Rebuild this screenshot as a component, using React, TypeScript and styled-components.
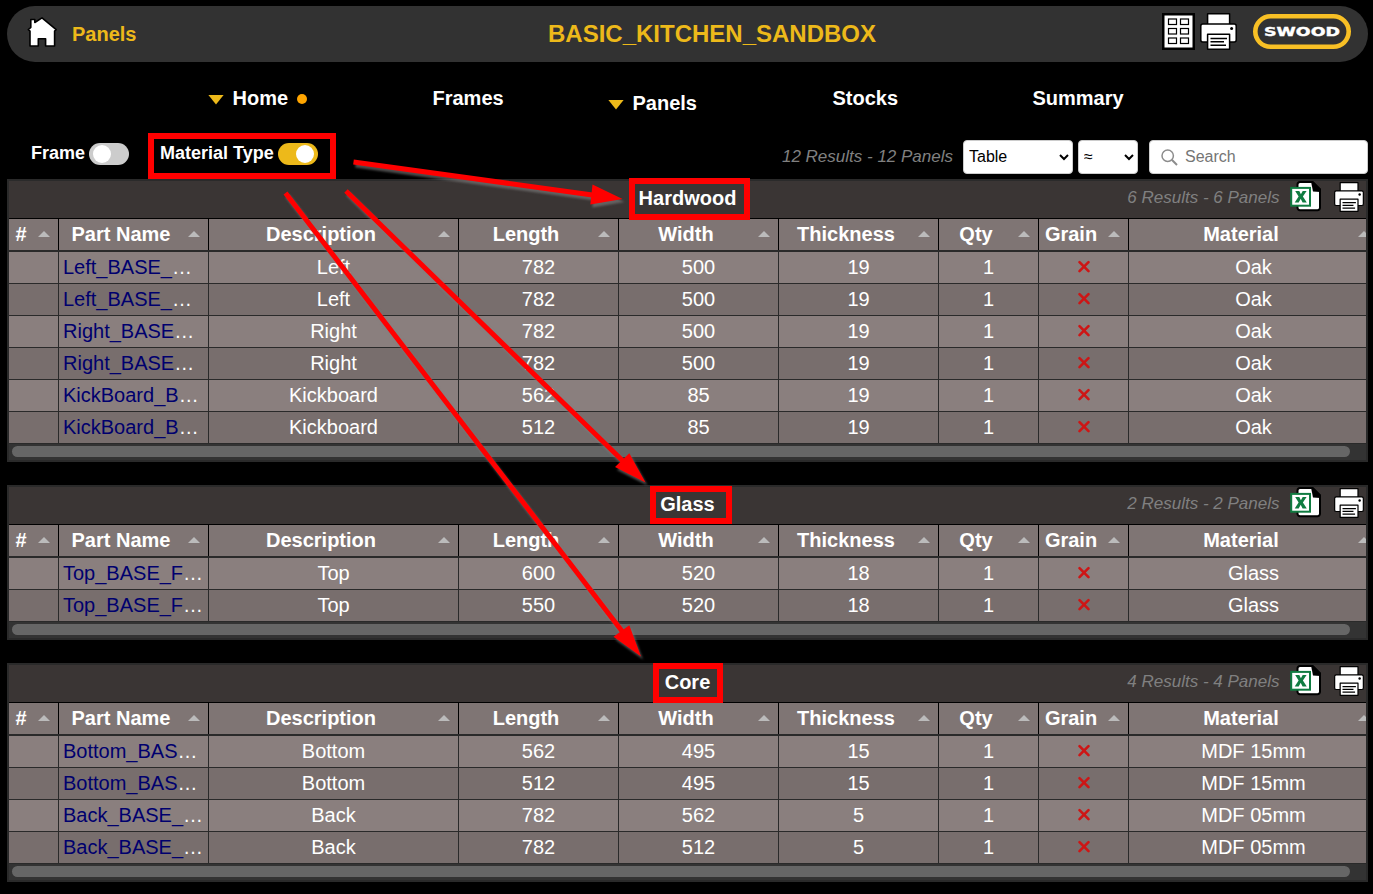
import React from "react";
import styled, { createGlobalStyle } from "styled-components";

const GlobalStyle = createGlobalStyle`
  * { box-sizing: border-box; }
  html, body { margin: 0; background: #000; overflow: hidden; }
  body { font-family: "Liberation Sans", Arial, sans-serif; color: #fff; }
`;

const Page = styled.div`
  position: relative;
  width: 1373px;
  height: 894px;
  padding: 6px 5px 0 7px;
  overflow: hidden;
  background: #000;
`;

const Header = styled.header`
  display: grid;
  grid-template-columns: 522px 1fr auto;
  align-items: center;
  height: 56px;
  padding: 0 17px 0 19px;
  border-radius: 28px;
  background: #323232;
`;

const HeaderLeft = styled.div`
  display: flex;
  align-items: center;
  gap: 14px;
  color: #edb91a;
  font-size: 20px;
  font-weight: bold;
`;

const HomeIcon = styled.svg`
  margin-top: -4px;
`;

const Title = styled.h1`
  margin: 0;
  color: #edb91a;
  font-size: 24px;
  line-height: 28px;
`;

const HeaderRight = styled.div`
  display: flex;
  align-items: flex-start;
  justify-content: flex-end;
  height: 42px;
`;

const Logo = styled.svg`
  margin: 1px 0 0 16px;
`;

const Nav = styled.nav`
  display: grid;
  grid-template-columns: repeat(5, 200px);
  height: 71px;
  padding: 24px 0 0 201px;
`;

const NavItem = styled.div<{ $open?: boolean }>`
  display: flex;
  align-items: center;
  height: 24px;
  margin-top: ${(p) => (p.$open ? 5 : 0)}px;
  font-size: 20px;
  font-weight: bold;
`;

const NavMark = styled.span<{ $shown?: boolean }>`
  width: 16px;
  height: 10px;
  margin: 3px 8.5px 0 0;
  clip-path: polygon(0 0, 100% 0, 50% 100%);
  background: ${(p) => (p.$shown ? "#edb91a" : "transparent")};
`;

const NavDot = styled.span`
  width: 10px;
  height: 10px;
  margin: 2px 0 0 8.5px;
  border-radius: 50%;
  background: #ffa500;
`;

const Toolbar = styled.div`
  display: flex;
  height: 46px;
  padding: 7px 0 0 24px;
`;

const ToggleGroup = styled.div`
  display: flex;
  height: 28px;
  align-items: center;
  margin-right: 31px;
`;

const ToggleLabel = styled.span`
  font-size: 18px;
  font-weight: bold;
  line-height: 26px;
  margin: -2px 4px 0 0;
`;

const Track = styled.span<{ $on?: boolean }>`
  display: flex;
  justify-content: ${(p) => (p.$on ? "flex-end" : "flex-start")};
  align-items: center;
  width: 40px;
  height: 22px;
  padding: 0 4px;
  border-radius: 11px;
  background: ${(p) => (p.$on ? "#edb91a" : "#ccc")};
`;

const Knob = styled.span`
  width: 18px;
  height: 18px;
  border-radius: 50%;
  background: #fff;
`;

const Controls = styled.div`
  display: flex;
  margin-left: auto;
`;

const Count = styled.span`
  color: #808080;
  font-size: 17px;
  font-style: italic;
  line-height: 34px;
  white-space: nowrap;
`;

const Select = styled.select<{ $w: number; $left: number }>`
  width: ${(p) => p.$w}px;
  height: 34px;
  margin-left: ${(p) => p.$left}px;
  padding: 0 1px 2px;
  border: 1px solid #ccc;
  border-radius: 4px;
  background-color: #fff;
  color: #000;
  font: 16px "Liberation Sans", Arial, sans-serif;
`;

const SearchBox = styled.label`
  display: flex;
  align-items: center;
  gap: 7px;
  width: 219px;
  height: 34px;
  margin-left: 11px;
  padding: 0 11px;
  border: 1px solid #ccc;
  border-radius: 4px;
  background: #fff;
`;

const SearchInput = styled.input`
  width: 160px;
  padding: 0;
  border: 0;
  outline: 0;
  font: 16px "Liberation Sans", Arial, sans-serif;
  &::placeholder { color: #757575; }
`;

const Panel = styled.section`
  width: 1361px;
  margin-bottom: 23px;
  border: 2px solid #2a2a2a;
  background: #333;
  overflow: hidden;
`;

const PanelBar = styled.div`
  display: grid;
  grid-template-columns: 1fr auto 1fr;
  height: 38px;
  border-bottom: 1px solid #000;
  background: #3a3534;
`;

const PanelTitle = styled.h2`
  grid-column: 2;
  margin: 0;
  font-size: 20px;
  line-height: 34px;
`;

const PanelTools = styled.div`
  display: flex;
  justify-content: flex-end;
  align-items: flex-start;
`;

const ExcelIcon = styled.svg`
  margin-left: 9px;
`;

const PanelPrint = styled.svg`
  margin: 1px 2px 0 12.5px;
`;

const GridRow = styled.div<{ $tone: string; $head?: boolean }>`
  display: grid;
  grid-template-columns: 50px 150px 250px 160px 160px 160px 100px 90px 250px;
  width: 1370px;
  height: ${(p) => (p.$head ? 33 : 32)}px;
  border-bottom: ${(p) => (p.$head ? 2 : 1)}px solid #2a2a2a;
  background: ${(p) => p.$tone};
`;

const HeadCell = styled.div`
  display: grid;
  grid-template-columns: 1fr 12px;
  column-gap: 8px;
  align-items: center;
  padding: 0 8px 0 3px;
  border-right: 1px solid #000;
  font-size: 20px;
  font-weight: bold;
  line-height: 31px;
  text-align: center;
  white-space: nowrap;
`;

const HeadText = styled.span`
  margin: -1px -6px 0;
`;

const SortMark = styled.span`
  width: 12px;
  height: 6px;
  margin-top: -1px;
  clip-path: polygon(50% 0, 100% 100%, 0 100%);
  background: #bbb;
`;

const Cell = styled.div<{ $left?: boolean }>`
  display: flex;
  align-items: center;
  justify-content: ${(p) => (p.$left ? "flex-start" : "center")};
  padding: 0 4px 1px;
  border-right: 1px solid #2a2a2a;
  font-size: 20px;
  white-space: nowrap;
  overflow: hidden;
`;

const PartLink = styled.a`
  color: #00006e;
`;

const ScrollTrack = styled.div`
  height: 16px;
  padding: 2px 16px 3px 3px;
`;

const ScrollThumb = styled.div`
  height: 11px;
  border-radius: 6px;
  background: #666;
`;

const Callout = styled.div<{ $x: number; $y: number; $w: number; $h: number }>`
  position: absolute;
  left: ${(p) => p.$x}px;
  top: ${(p) => p.$y}px;
  width: ${(p) => p.$w}px;
  height: ${(p) => p.$h}px;
  border: 6px solid #f00;
`;

const Arrows = styled.svg`
  position: absolute;
  left: 0;
  top: 0;
  filter: drop-shadow(2px 3px 1px rgba(128, 128, 128, 0.6));
`;

const PrinterArt = () => (
  <g stroke="#000" strokeWidth="1.5" strokeLinejoin="round">
    <rect x="7.6" y="0.8" width="22" height="14" fill="#fff" />
    <rect x="0.8" y="11" width="35.4" height="18" rx="2" fill="#fff" />
    <path d="M7.600 36.200V21.200h22v15z" fill="#fff" />
    <circle cx="31.600" cy="15.500" r="1.500" fill="#000" stroke="none" />
    <path d="M10.500 25.500H27M10.500 28.700H24M10.500 32.200H26" strokeWidth="1.500" />
  </g>
);

const COLUMNS = ["#", "Part Name", "Description", "Length", "Width", "Thickness", "Qty", "Grain", "Material"];

type Row = [string, string, number, number, number, string];

const GROUPS: { title: string; rows: Row[] }[] = [
  {
    title: "Hardwood",
    rows: [
      ["Left_BASE_", "Left", 782, 500, 19, "Oak"],
      ["Left_BASE_", "Left", 782, 500, 19, "Oak"],
      ["Right_BASE", "Right", 782, 500, 19, "Oak"],
      ["Right_BASE", "Right", 782, 500, 19, "Oak"],
      ["KickBoard_B", "Kickboard", 562, 85, 19, "Oak"],
      ["KickBoard_B", "Kickboard", 512, 85, 19, "Oak"],
    ],
  },
  {
    title: "Glass",
    rows: [
      ["Top_BASE_F", "Top", 600, 520, 18, "Glass"],
      ["Top_BASE_F", "Top", 550, 520, 18, "Glass"],
    ],
  },
  {
    title: "Core",
    rows: [
      ["Bottom_BAS", "Bottom", 562, 495, 15, "MDF 15mm"],
      ["Bottom_BAS", "Bottom", 512, 495, 15, "MDF 15mm"],
      ["Back_BASE_", "Back", 782, 562, 5, "MDF 05mm"],
      ["Back_BASE_", "Back", 782, 512, 5, "MDF 05mm"],
    ],
  },
];

const PanelGroup = ({ title, rows }: { title: string; rows: Row[] }) => (
  <Panel>
    <PanelBar>
      <PanelTitle>{title}</PanelTitle>
      <PanelTools>
        <Count>{`${rows.length} Results - ${rows.length} Panels`}</Count>
        <ExcelIcon width="33" height="32" viewBox="0 0 33 32">
          <path d="M11 1H23.500L31 8.500v18.300a2.500 2.500 0 0 1-2.500 2.500H11a2.500 2.500 0 0 1-2.500-2.500V3.500A2.500 2.500 0 0 1 11 1z" fill="#fff" stroke="#000" strokeWidth="2" />
          <path d="M22 0.500h2.500l7 7V11L24 10.500z" fill="#000" />
          <rect x="2.200" y="6.900" width="18.800" height="17.800" fill="#fff" stroke="#107c41" strokeWidth="2" />
          <path d="M6.200 10h4.100l1.600 3.200 1.800-3.200h3.900l-3.700 5.600 3.900 5.800h-4.200l-1.900-3.600-2 3.600H5.700l3.900-5.800z" fill="#107c41" />
        </ExcelIcon>
        <PanelPrint width="30" height="30" viewBox="0 0 37 37">
          <PrinterArt />
        </PanelPrint>
      </PanelTools>
    </PanelBar>
    <GridRow $tone="#7f7574" $head>
      {COLUMNS.map((c) => (
        <HeadCell key={c}>
          <HeadText>{c}</HeadText>
          <SortMark />
        </HeadCell>
      ))}
    </GridRow>
    {rows.map(([part, desc, length, width, thick, material], i) => (
      <GridRow key={i} $tone={i % 2 ? "#786e6d" : "#8a7f7e"}>
        <Cell />
        <Cell $left><PartLink>{part}</PartLink>…</Cell>
        <Cell>{desc}</Cell>
        <Cell>{length}</Cell>
        <Cell>{width}</Cell>
        <Cell>{thick}</Cell>
        <Cell>1</Cell>
        <Cell>
          <svg width="14" height="14" viewBox="0 0 14 14">
            <path d="M2.500 2.200 11.500 11.200M11.500 2.200 2.500 11.200" stroke="#ce1515" strokeWidth="2.600" strokeLinecap="round" />
          </svg>
        </Cell>
        <Cell>{material}</Cell>
      </GridRow>
    ))}
    <ScrollTrack><ScrollThumb /></ScrollTrack>
  </Panel>
);

export default function App() {
  return (
    <Page>
      <GlobalStyle />
      <Header>
        <HeaderLeft>
          <HomeIcon width="32" height="32" viewBox="0 0 32 32">
            <path d="M4.800 3.500h4v3L16 1.800 30.200 13.600 28.600 15V30h-9V22.800H12.300V30H4V15L2.300 13.600 4.800 11.500z" fill="#fff" stroke="#000" strokeWidth="1.600" strokeLinejoin="round" />
          </HomeIcon>
          <span>Panels</span>
        </HeaderLeft>
        <Title>BASIC_KITCHEN_SANDBOX</Title>
        <HeaderRight>
          <svg width="33" height="37" viewBox="0 0 33 37">
            <rect width="33" height="37" fill="#000" />
            <rect x="2.500" y="2.500" width="28" height="32" fill="#fff" />
            {[6, 15.500, 25].map((y) =>
              [6.500, 18.500].map((x) => (
                <rect key={`${x}-${y}`} x={x} y={y} width="8" height="5.500" fill="#fff" stroke="#000" strokeWidth="1.200" />
              ))
            )}
          </svg>
          <svg width="42" height="38" viewBox="-5 0 42 38">
            <PrinterArt />
          </svg>
          <Logo width="98" height="36" viewBox="0 0 98 36">
            <rect x="2.300" y="2.300" width="93.400" height="30.500" rx="15.250" fill="none" stroke="#f8c025" strokeWidth="4.600" />
            <text x="11" y="21.800" fill="#fff" stroke="#fff" strokeWidth="0.400" fontFamily="DejaVu Sans" fontWeight="bold" fontSize="12.500" textLength="76" lengthAdjust="spacingAndGlyphs">SWOOD</text>
          </Logo>
        </HeaderRight>
      </Header>
      <Nav>
        <NavItem><NavMark $shown />Home<NavDot /></NavItem>
        <NavItem><NavMark />Frames</NavItem>
        <NavItem $open><NavMark $shown />Panels</NavItem>
        <NavItem><NavMark />Stocks</NavItem>
        <NavItem><NavMark />Summary</NavItem>
      </Nav>
      <Toolbar>
        <ToggleGroup>
          <ToggleLabel>Frame</ToggleLabel>
          <Track><Knob /></Track>
        </ToggleGroup>
        <ToggleGroup>
          <ToggleLabel>Material Type</ToggleLabel>
          <Track $on><Knob /></Track>
        </ToggleGroup>
        <Controls>
          <Count>12 Results - 12 Panels</Count>
          <Select $w={110} $left={10}><option>Table</option></Select>
          <Select $w={60} $left={5}><option>≈</option></Select>
          <SearchBox>
            <svg width="17" height="17" viewBox="0 0 17 17" fill="none" stroke="#8c8c8c">
              <circle cx="6.700" cy="6.700" r="5.700" strokeWidth="1.500" />
              <path d="m10.800 10.800 5.200 5.200" strokeWidth="2" />
            </svg>
            <SearchInput placeholder="Search" />
          </SearchBox>
        </Controls>
      </Toolbar>
      {GROUPS.map((g) => <PanelGroup key={g.title} {...g} />)}

      <Arrows width="1373" height="894" viewBox="0 0 1373 894" fill="#f00" stroke="#f00">
        <path d="M353.500 162 596 195.500M346 191 626 464M285.500 193 625 635" strokeWidth="5" fill="none" />
        <path d="M592.500 184.500 622.500 199 590.300 204.500zM629.300 453.300 645.500 482.500 615 467zM629.300 625.300 641 656.500 613.500 636.700z" stroke="none" />
      </Arrows>
      <Callout $x={148} $y={133} $w={188} $h={46} />
      <Callout $x={629} $y={178} $w={121} $h={42} />
      <Callout $x={650} $y={486} $w={82} $h={38} />
      <Callout $x={653} $y={663} $w={70} $h={40} />
    </Page>
  );
}
